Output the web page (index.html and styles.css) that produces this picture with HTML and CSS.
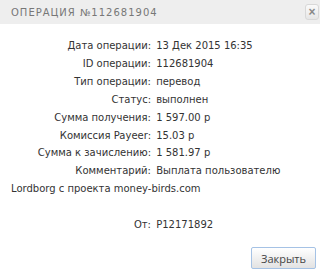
FILE: index.html
```html
<!DOCTYPE html>
<html lang="ru">

<head>
    <meta charset="UTF-8">
    <meta name="viewport" content="width=device-width, initial-scale=1.0">
    <title>Операция</title>
    <link rel="stylesheet" href="styles.css">
</head>

<body>
    <div class="dialog">
        <div class="dialog-head">
            <span class="dialog-title">Операция №112681904</span>
            <button class="close-btn" type="button">&times;</button>
        </div>
        <div class="dialog-body">
            <p class="row"><span class="label">Дата операции:</span> 13 Дек 2015 16:35</p>
            <p class="row"><span class="label">ID операции:</span> 112681904</p>
            <p class="row"><span class="label">Тип операции:</span> перевод</p>
            <p class="row"><span class="label">Статус:</span> выполнен</p>
            <p class="row"><span class="label">Сумма получения:</span> 1 597.00 р</p>
            <p class="row"><span class="label">Комиссия Payeer:</span> 15.03 р</p>
            <p class="row"><span class="label">Сумма к зачислению:</span> 1 581.97 р</p>
            <p class="row"><span class="label">Комментарий:</span> Выплата пользователю<br>Lordborg с проекта money-birds.com</p>
            <p class="row">&nbsp;</p>
            <p class="row"><span class="label">От:</span> P12171892</p>
        </div>
        <div class="dialog-foot">
            <button class="btn" type="button">Закрыть</button>
        </div>
    </div>
</body>

</html>
```

FILE: styles.css
```css
* {
    margin: 0;
    padding: 0;
    box-sizing: border-box;
}

body {
    background-color: #ffffff;
    font-family: "DejaVu Sans", Arial, sans-serif;
    color: #333333;
}

.dialog {
    width: 320px;
    height: 275px;
    display: flex;
    flex-direction: column;
}

.dialog-head {
    height: 24px;
    background-color: #eeeeee;
    display: flex;
    align-items: center;
    justify-content: space-between;
    padding: 0 1px 0 11px;
}

.dialog-title {
    font-size: 10px;
    text-transform: uppercase;
    letter-spacing: 1px;
    color: #777777;
}

.close-btn {
    width: 14px;
    height: 16px;
    border: 1px solid #d8d8d8;
    border-radius: 3px;
    background: linear-gradient(#fafafa, #e6e6e6);
    color: #888888;
    font-size: 12px;
    line-height: 12px;
    font-weight: bold;
    font-family: Arial, sans-serif;
}

.dialog-body {
    padding: 13px 11px 0 11px;
}

.row {
    font-size: 10px;
    line-height: 17.9px;
}

.label {
    display: inline-block;
    width: 140px;
    text-align: right;
    margin-right: 2px;
}

.dialog-foot {
    margin-top: auto;
    display: flex;
    justify-content: flex-end;
    padding: 0 4px 6px 0;
}

.btn {
    width: 65px;
    height: 22px;
    border: 1px solid #a5c2e5;
    border-radius: 2px;
    background: linear-gradient(#ffffff, #e2e2e2);
    color: #444444;
    font-family: "Open Sans", Arial, sans-serif;
    font-size: 11px;
}
```
